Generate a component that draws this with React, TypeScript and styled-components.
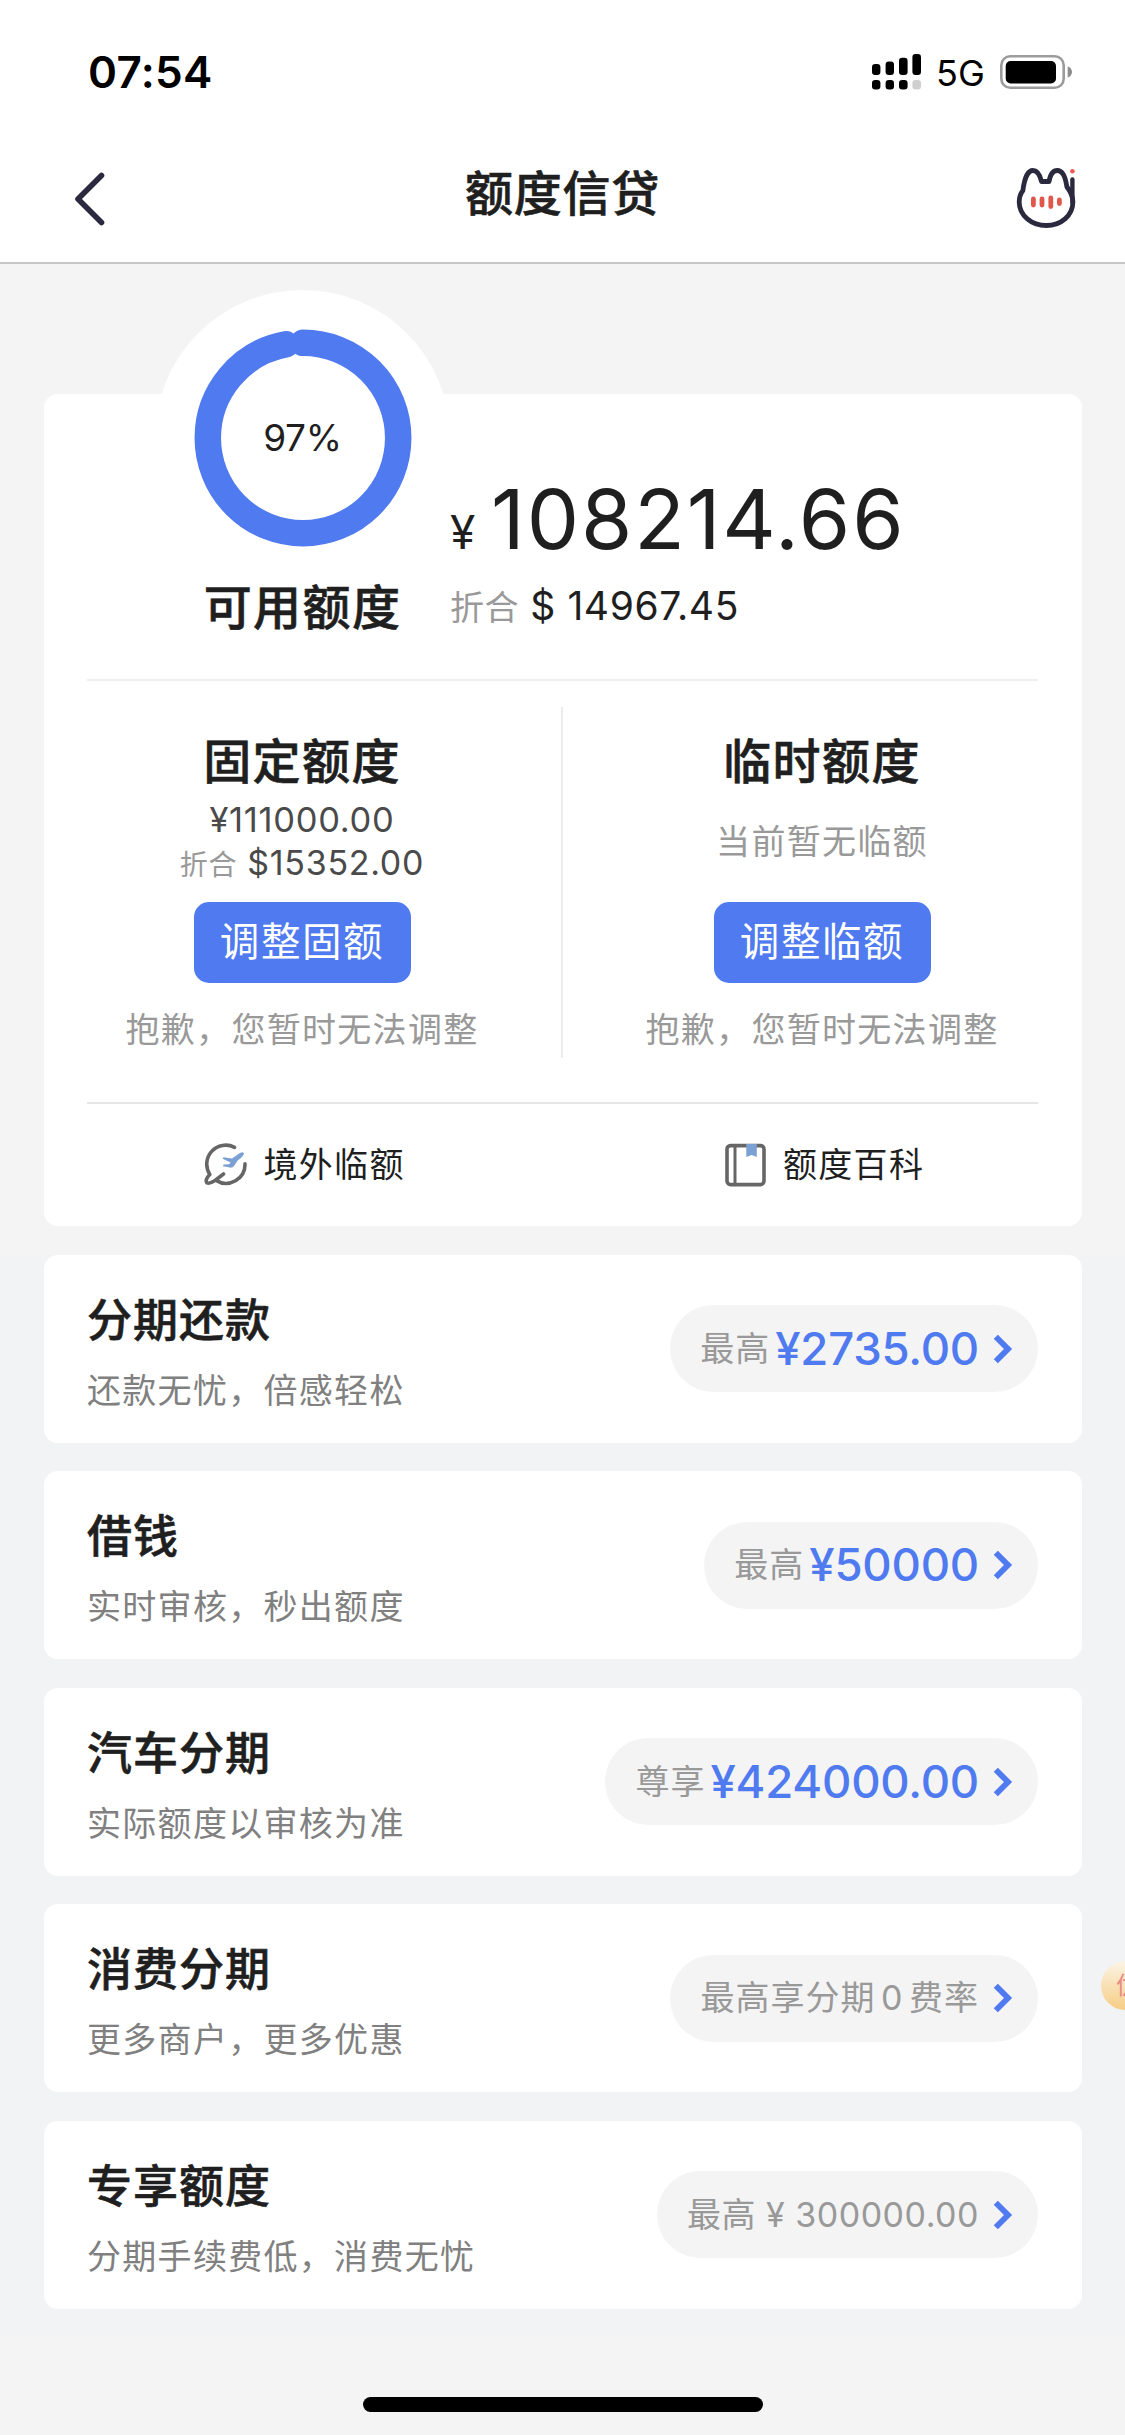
import React from "react";
import styled, { createGlobalStyle } from "styled-components";

const BLUE = "#4f7af0";
const INK = "#1f1f1f";

const GlobalStyle = createGlobalStyle`
  *, *::before, *::after { box-sizing: border-box; }
  body {
    margin: 0;
    background: #f4f4f4;
    font-family: Inter, "Noto Sans CJK SC", sans-serif;
    color: ${INK};
    overflow: hidden;
  }
`;

const Screen = styled.div`
  width: 1125px;
  height: 2435px;
  display: flex;
  flex-direction: column;
  overflow: hidden;
  position: relative;
`;

const Header = styled.header`
  height: 264px;
  background: #fff;
  border-bottom: 2px solid #c6c6c6;
  flex: none;
`;

const StatusBar = styled.div`
  height: 144px;
  padding: 0 52px 0 88px;
  display: flex;
  justify-content: space-between;
  align-items: center;
`;

const Clock = styled.span`
  font-size: 44px;
  font-weight: 600;
  letter-spacing: 0.3px;
  line-height: 60px;
  color: #000;
`;

const StatusIcons = styled.div`
  display: flex;
  align-items: center;
  color: #000;
`;

const Network = styled.span`
  font-size: 36px;
  line-height: 40px;
  width: 48px;
  margin: 2px 16px 0 15px;
  white-space: nowrap;
`;

const NavBar = styled.div`
  height: 118px;
  padding: 0 48px 0 73px;
  display: grid;
  grid-template-columns: 62px 1fr 62px;
  align-items: start;
`;

const NavTitle = styled.h1`
  margin: 18px 25px 0 0;
  font-size: 48px;
  line-height: 64px;
  font-weight: 500;
  letter-spacing: 0.8px;
  text-align: center;
  -webkit-text-stroke: 0.6px currentColor;
`;

const BackIcon = styled.svg`
  width: 32px;
  height: 56px;
  margin-top: 27px;
`;

const CatIcon = styled.svg`
  width: 62px;
  height: 64px;
  margin-top: 21px;
`;

const Card = styled.section`
  width: 1038px;
  height: 832px;
  margin: 130px 0 0 43.5px;
  padding: 0 43.5px;
  background: #fff;
  border-radius: 14px;
  flex: none;
`;

const Hero = styled.div`
  height: 287px;
  border-bottom: 2px solid #efefef;
  display: flex;
`;

const RingColumn = styled.div`
  width: 295px;
  margin: -104px 0 0 68px;
  display: flex;
  flex-direction: column;
  align-items: center;
  flex: none;
`;

const RingDisc = styled.div`
  width: 295px;
  height: 295px;
  border-radius: 50%;
  background: #fff;
  display: grid;
  place-items: center;
  > * { grid-area: 1 / 1; }
  flex: none;
`;

const RingValue = styled.span`
  font-size: 37px;
  line-height: 44px;
  letter-spacing: -0.3px;
`;

const BlockTitle = styled.h2`
  margin: 0;
  font-size: 48px;
  line-height: 60px;
  font-weight: 500;
  letter-spacing: 1.4px;
  white-space: nowrap;
  -webkit-text-stroke: 0.6px currentColor;
`;

const HeroTitle = styled(BlockTitle)`
  margin-top: -7px;
`;

const AmountColumn = styled.div`
  padding-top: 79px;
  display: flex;
  flex-direction: column;
`;

const Amount = styled.div`
  display: flex;
  align-items: baseline;
  line-height: 92px;
  white-space: nowrap;
`;

const Currency = styled.span`
  font-size: 46px;
  width: 41px;
`;

const AmountValue = styled.span`
  font-size: 83px;
  letter-spacing: 1.9px;
`;

const Converted = styled.div<{ $gap: number; $labelSize: number }>`
  display: flex;
  align-items: baseline;
  gap: ${(p) => p.$gap}px;
  white-space: pre;
  > small {
    font-size: ${(p) => p.$labelSize}px;
    color: #999;
  }
`;

const HeroConverted = styled(Converted)`
  font-size: 39px;
  line-height: 50px;
  letter-spacing: 0.6px;
  margin-top: 3px;
`;

const Limits = styled.div`
  height: 421px;
  margin: 0 -43.5px;
  padding-top: 26px;
  display: grid;
  grid-template-columns: 1fr 1fr;
`;

const LimitColumn = styled.div<{ $divided?: boolean }>`
  height: 351px;
  padding-top: 25px;
  display: flex;
  flex-direction: column;
  align-items: center;
  border-right: ${(p) => (p.$divided ? "2px solid #ececec" : "none")};
`;

const LimitDetail = styled.div`
  height: 100px;
  display: flex;
  flex-direction: column;
  align-items: center;
  justify-content: center;
`;

const LimitValue = styled.div`
  font-size: 34.5px;
  line-height: 43px;
  letter-spacing: 0.7px;
  color: #4a4a4a;
`;

const LimitConverted = styled(Converted)`
  font-size: 34px;
  line-height: 43px;
  letter-spacing: 0.7px;
  color: #4a4a4a;
`;

const Note = styled.div`
  font-size: 34px;
  line-height: 44px;
  letter-spacing: 1.3px;
  color: #999;
  white-space: nowrap;
`;

const AdjustButton = styled.button`
  width: 217px;
  height: 81px;
  margin: 10px 0 25px;
  padding: 0;
  border: 0;
  border-radius: 15px;
  background: ${BLUE};
  color: #fff;
  font-family: inherit;
  font-size: 39.5px;
  line-height: 79px;
  letter-spacing: 1.6px;
  flex: none;
`;

const Shortcuts = styled.div`
  height: 124px;
  border-top: 2px solid #e6e6e6;
  display: grid;
  grid-template-columns: 1fr 1fr;
`;

const Shortcut = styled.a<{ $inset: number }>`
  display: flex;
  align-items: center;
  gap: 16px;
  padding: 0 0 1px ${(p) => p.$inset}px;
  font-size: 34px;
  letter-spacing: 1.3px;
  line-height: 44px;
  white-space: nowrap;
  svg { flex: none; }
`;

const Offers = styled.main`
  margin-top: 28.5px;
  padding: 0 43.5px 27px;
  display: flex;
  flex-direction: column;
  gap: 28.5px;
  background: #f2f3f5;
`;

const Offer = styled.article`
  height: 188px;
  padding: 0 44px 0 43.5px;
  background: #fff;
  border-radius: 14px;
  display: flex;
  align-items: center;
  justify-content: space-between;
`;

const OfferText = styled.div`
  display: flex;
  flex-direction: column;
  padding-top: 6px;
`;

const OfferTitle = styled.h3`
  margin: 0;
  font-size: 45px;
  line-height: 60px;
  font-weight: 500;
  letter-spacing: 1px;
  -webkit-text-stroke: 0.6px currentColor;
`;

const OfferHint = styled.p`
  margin: 18px 0 0;
  font-size: 34px;
  line-height: 44px;
  letter-spacing: 1.3px;
  color: #808080;
`;

const Pill = styled.button`
  height: 87px;
  padding: 0 25px 0 30px;
  border: 0;
  border-radius: 44px;
  background: #f4f4f4;
  display: flex;
  align-items: center;
  font-family: inherit;
  white-space: pre;
`;

const PillLabel = styled.span<{ $wordGap?: number; $tracking?: number }>`
  font-size: 34px;
  line-height: 50px;
  letter-spacing: ${(p) => p.$tracking ?? 1}px;
  word-spacing: ${(p) => p.$wordGap ?? 0}px;
  color: #999;
`;

const PillValue = styled.span`
  margin-left: 5px;
  font-size: 45.5px;
  font-weight: 500;
  line-height: 50px;
  letter-spacing: -0.2px;
  color: ${BLUE};
`;

const PillArrow = styled.svg`
  width: 20px;
  height: 30px;
  margin-left: 13.5px;
`;

const FloatBadge = styled.div`
  position: absolute;
  left: 1101px;
  top: 1961px;
  width: 49px;
  height: 49px;
  border-radius: 50%;
  background: linear-gradient(#fbf4e6, #f6cd84);
  color: #e98a86;
  font-size: 24px;
  line-height: 49px;
  padding-left: 15px;
  white-space: nowrap;
`;

const HomeIndicator = styled.div`
  width: 400px;
  height: 15px;
  border-radius: 8px;
  background: #000;
  margin: 61px 0 0 363px;
  flex: none;
`;

const SignalIcon = () => (
  <svg width="49" height="36" viewBox="0 0 49 36">
    <rect x="0" y="10" width="8.4" height="11" rx="3.2" />
    <rect x="13.6" y="7.6" width="8.4" height="13.4" rx="3.2" />
    <rect x="27" y="3.8" width="8.6" height="17.2" rx="3.2" />
    <rect x="40.4" y="0" width="8.6" height="21" rx="3.2" />
    <rect x="0" y="26" width="8.4" height="9.4" rx="3.2" />
    <rect x="13.6" y="26" width="8.4" height="9.4" rx="3.2" />
    <rect x="27" y="26" width="8.6" height="9.4" rx="3.2" />
    <rect x="40.4" y="26" width="8.6" height="9.4" rx="3.2" fill="#cfcfcf" />
  </svg>
);

const BatteryIcon = () => (
  <svg width="73" height="34" viewBox="0 0 73 34">
    <rect x="1.3" y="1.3" width="62.4" height="31.4" rx="9" fill="none" stroke="#9c9c9c" strokeWidth="2.6" />
    <rect x="5.7" y="6" width="50.3" height="22.4" rx="5" />
    <path d="M67.7 11.5c2.6.8 4.3 3 4.3 5.5s-1.7 4.7-4.3 5.5z" fill="#8c8c8c" />
  </svg>
);

const Ring = ({ percent }: { percent: number }) => {
  const radius = 95.2;
  const length = 2 * Math.PI * radius;
  return (
    <svg width="218" height="218" viewBox="-109 -109 218 218">
      <circle
        r={radius}
        fill="none"
        stroke={BLUE}
        strokeWidth="26.5"
        strokeLinecap="round"
        strokeDasharray={`${(length * percent) / 100} ${length}`}
        transform="rotate(-90)"
      />
    </svg>
  );
};

const GlobeIcon = () => (
  <svg width="44" height="44" viewBox="0 0 44 44" fill="none">
    <path
      d="M30.5 4.3A19 19 0 0 0 5.8 31.5C2.600 34.5 1.4 38.2 2.800 39.700C5 41.200 9 38.800 11 37.500L19.500 31M12 37.400A19 19 0 0 0 41 20.700"
      stroke="#666"
      strokeWidth="3.6"
      strokeLinecap="round"
      strokeLinejoin="round"
    />
    <path
      d="M19.500 14.300L28 15.600L36 9.900Q39.800 8 40 10.800Q39.500 13.300 33.700 17.500L30.200 22.800Q28.600 24.900 26 24.600L18.800 23.300L19.600 21.600L25 21.200L26.600 19.500L18.600 15.700Z"
      fill="#7ba0d4"
    />
  </svg>
);

const BookIcon = () => (
  <svg width="42" height="44" viewBox="0 0 42 44" fill="none">
    <rect x="2" y="2.6" width="37" height="39" rx="3.5" stroke="#666" strokeWidth="3.6" />
    <path d="M10 3v39" stroke="#666" strokeWidth="3" />
    <path d="M21.300 1h10.500v13l-5.200-2-5.300 2z" fill="#7ba0d4" />
  </svg>
);

type OfferItem = {
  title: string;
  hint: string;
  label: string;
  value?: string;
  wordGap?: number;
  tracking?: number;
};

const offers: OfferItem[] = [
  { title: "分期还款", hint: "还款无忧，倍感轻松", label: "最高", value: "¥2735.00" },
  { title: "借钱", hint: "实时审核，秒出额度", label: "最高", value: "¥50000" },
  { title: "汽车分期", hint: "实际额度以审核为准", label: "尊享", value: "¥424000.00" },
  { title: "消费分期", hint: "更多商户，更多优惠", label: "最高享分期 0 费率", wordGap: -5 },
  { title: "专享额度", hint: "分期手续费低，消费无忧", label: "最高 ¥ 300000.00", wordGap: 0, tracking: 0.5 },
];

export default function App() {
  return (
    <Screen>
      <GlobalStyle />
      <Header>
        <StatusBar>
          <Clock>07:54</Clock>
          <StatusIcons>
            <SignalIcon />
            <Network>5G</Network>
            <BatteryIcon />
          </StatusIcons>
        </StatusBar>
        <NavBar>
          <BackIcon viewBox="0 0 32 56" fill="none">
            <path d="M28.500 4.500L5 28l23.500 23.500" stroke="#2b293d" strokeWidth="5.6" strokeLinecap="round" strokeLinejoin="round" />
          </BackIcon>
          <NavTitle>额度信贷</NavTitle>
          <CatIcon viewBox="0 0 62 64" fill="none">
            <path
              d="M26.500 16.500h7.500c1.200-6.500 4.200-11 8.300-11 5 0 8.200 6.500 9.600 16.500 3.600 4.600 6 9 6 15 0 13.500-12 23.500-26.600 23.500S4.200 50.500 4.200 37c0-4.700 1.200-8.300 3.700-11.500C9.200 15 12.500 5.500 17.800 5.500c4 0 7.200 4.500 8.700 11z"
              stroke="#2b293d"
              strokeWidth="4.8"
              strokeLinejoin="round"
            />
            <path d="M57.400 14.500V37" stroke="#2b293d" strokeWidth="4.4" strokeLinecap="round" />
            <path d="M52 21l5 8" stroke="#2b293d" strokeWidth="3.6" />
            <circle cx="57.4" cy="6.3" r="2.3" fill="#ee5a52" />
            <path d="M18.400 34v6M27 34v6M35.800 33v8.500M44.400 35v3.500" stroke="#e2574c" strokeWidth="4.8" strokeLinecap="round" />
          </CatIcon>
        </NavBar>
      </Header>

      <Card>
        <Hero>
          <RingColumn>
            <RingDisc>
              <Ring percent={97} />
              <RingValue>97%</RingValue>
            </RingDisc>
            <HeroTitle>可用额度</HeroTitle>
          </RingColumn>
          <AmountColumn>
            <Amount>
              <Currency>¥</Currency>
              <AmountValue>108214.66</AmountValue>
            </Amount>
            <HeroConverted $gap={11} $labelSize={34}>
              <small>折合</small>
              <span>$ 14967.45</span>
            </HeroConverted>
          </AmountColumn>
        </Hero>

        <Limits>
          <LimitColumn $divided>
            <BlockTitle>固定额度</BlockTitle>
            <LimitDetail>
              <LimitValue>¥111000.00</LimitValue>
              <LimitConverted $gap={10} $labelSize={28}>
                <small>折合</small>
                <span>$15352.00</span>
              </LimitConverted>
            </LimitDetail>
            <AdjustButton>调整固额</AdjustButton>
            <Note>抱歉，您暂时无法调整</Note>
          </LimitColumn>
          <LimitColumn>
            <BlockTitle>临时额度</BlockTitle>
            <LimitDetail>
              <Note>当前暂无临额</Note>
            </LimitDetail>
            <AdjustButton>调整临额</AdjustButton>
            <Note>抱歉，您暂时无法调整</Note>
          </LimitColumn>
        </Limits>

        <Shortcuts>
          <Shortcut $inset={116.5}>
            <GlobeIcon />
            <span>境外临额</span>
          </Shortcut>
          <Shortcut $inset={162.5}>
            <BookIcon />
            <span>额度百科</span>
          </Shortcut>
        </Shortcuts>
      </Card>

      <Offers>
        {offers.map((offer) => (
          <Offer key={offer.title}>
            <OfferText>
              <OfferTitle>{offer.title}</OfferTitle>
              <OfferHint>{offer.hint}</OfferHint>
            </OfferText>
            <Pill>
              <PillLabel $wordGap={offer.wordGap} $tracking={offer.tracking}>
                {offer.label}
              </PillLabel>
              {offer.value && <PillValue>{offer.value}</PillValue>}
              <PillArrow viewBox="0 0 20 30" fill="none">
                <path d="M2.800 2.800L15 15 2.800 27.200" stroke={BLUE} strokeWidth="5.8" />
              </PillArrow>
            </Pill>
          </Offer>
        ))}
      </Offers>

      <HomeIndicator />
      <FloatBadge>优</FloatBadge>
    </Screen>
  );
}
